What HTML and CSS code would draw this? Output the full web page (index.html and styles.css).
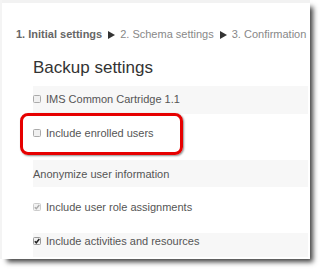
FILE: index.html
```html
<!DOCTYPE html>
<html>
<head>
<meta charset="utf-8">
<link rel="stylesheet" href="styles.css">
</head>
<body>
<div class="shot">
  <div class="topbar"></div>
  <div class="crumbs">
    <span class="cur">1. Initial settings</span>
    <svg class="tri" width="7" height="8" viewBox="0 0 7 8"><polygon points="0,0 7,4 0,8" fill="#333"/></svg>
    <span>2. Schema settings</span>
    <svg class="tri" width="7" height="8" viewBox="0 0 7 8"><polygon points="0,0 7,4 0,8" fill="#333"/></svg>
    <span>3. Confirmation</span>
  </div>
  <h2 class="title">Backup settings</h2>
  <div class="rows">
    <div class="row r1 alt">
      <svg class="cb" width="8" height="8" viewBox="0 0 8 8"><rect x="0.5" y="0.5" width="7" height="7" rx="1" fill="#f0f0f0" stroke="#aaa"/></svg>
      <span>IMS Common Cartridge 1.1</span>
    </div>
    <div class="row r2">
      <svg class="cb" width="8" height="8" viewBox="0 0 8 8"><rect x="0.5" y="0.5" width="7" height="7" rx="1" fill="#f0f0f0" stroke="#aaa"/></svg>
      <span>Include enrolled users</span>
    </div>
    <div class="row r3 alt">
      <span>Anonymize user information</span>
    </div>
    <div class="row r4">
      <svg class="cb" width="8" height="8" viewBox="0 0 8 8"><rect x="0.5" y="0.5" width="7" height="7" rx="1" fill="#f2f2f2" stroke="#ccc"/><path d="M1.8 4.2 L3.3 5.8 L6.3 2" fill="none" stroke="#aaa" stroke-width="1.4"/></svg>
      <span>Include user role assignments</span>
    </div>
    <div class="row r5 alt">
      <svg class="cb" width="8" height="8" viewBox="0 0 8 8"><rect x="0.5" y="0.5" width="7" height="7" rx="1" fill="#f0f0f0" stroke="#999"/><path d="M1.8 4.2 L3.3 5.8 L6.3 2" fill="none" stroke="#222" stroke-width="1.5"/></svg>
      <span>Include activities and resources</span>
    </div>
  </div>
  <div class="highlight"></div>
</div>
</body>
</html>
```

FILE: styles.css
```css
html, body {
  margin: 0;
  padding: 0;
  background: #fff;
}
body {
  font-family: "Liberation Sans", Arial, sans-serif;
  width: 322px;
  height: 272px;
  overflow: hidden;
}
.shot {
  position: relative;
  width: 308px;
  height: 259px;
  background: #fff;
  border-left: 2px solid #f4f4f4;
  box-shadow: 5px 5px 5px -2px rgba(0, 0, 0, 0.75);
}
.topbar {
  height: 3px;
  background: #f2f2f2;
}
.crumbs {
  margin: 25px 0 0 14px;
  height: 13px;
  font-size: 11px;
  line-height: 13px;
  color: #888;
  white-space: nowrap;
  overflow: hidden;
  display: flex;
  align-items: center;
}
.crumbs .cur {
  font-weight: bold;
  color: #666;
}
.tri {
  margin: 0 5px 0 6px;
  flex: none;
}
.title {
  margin: 17px 0 0 31px;
  font-size: 17px;
  line-height: 20px;
  font-weight: normal;
  color: #333;
}
.rows {
  margin: 8px 0 0 31px;
  width: 275px;
}
.row {
  font-size: 11px;
  line-height: 13px;
  color: #555;
  display: flex;
  align-items: flex-start;
  white-space: nowrap;
  box-sizing: border-box;
}
.row.alt {
  background: #f7f7f7;
}
.cb {
  margin: 2px 5px 0 0;
  flex: none;
}
.r1 { height: 28px; padding-top: 7px; }
.r2 { height: 46px; padding-top: 13px; }
.r3 { height: 27px; padding-top: 8px; }
.r4 { height: 46px; padding-top: 14px; }
.r5 { height: 24px; padding-top: 2px; }
.highlight {
  position: absolute;
  left: 18px;
  top: 113px;
  width: 157px;
  height: 36px;
  border: 3px solid #e60000;
  border-radius: 8px;
  box-shadow: 1px 1px 2px rgba(0, 0, 0, 0.45);
}
```
